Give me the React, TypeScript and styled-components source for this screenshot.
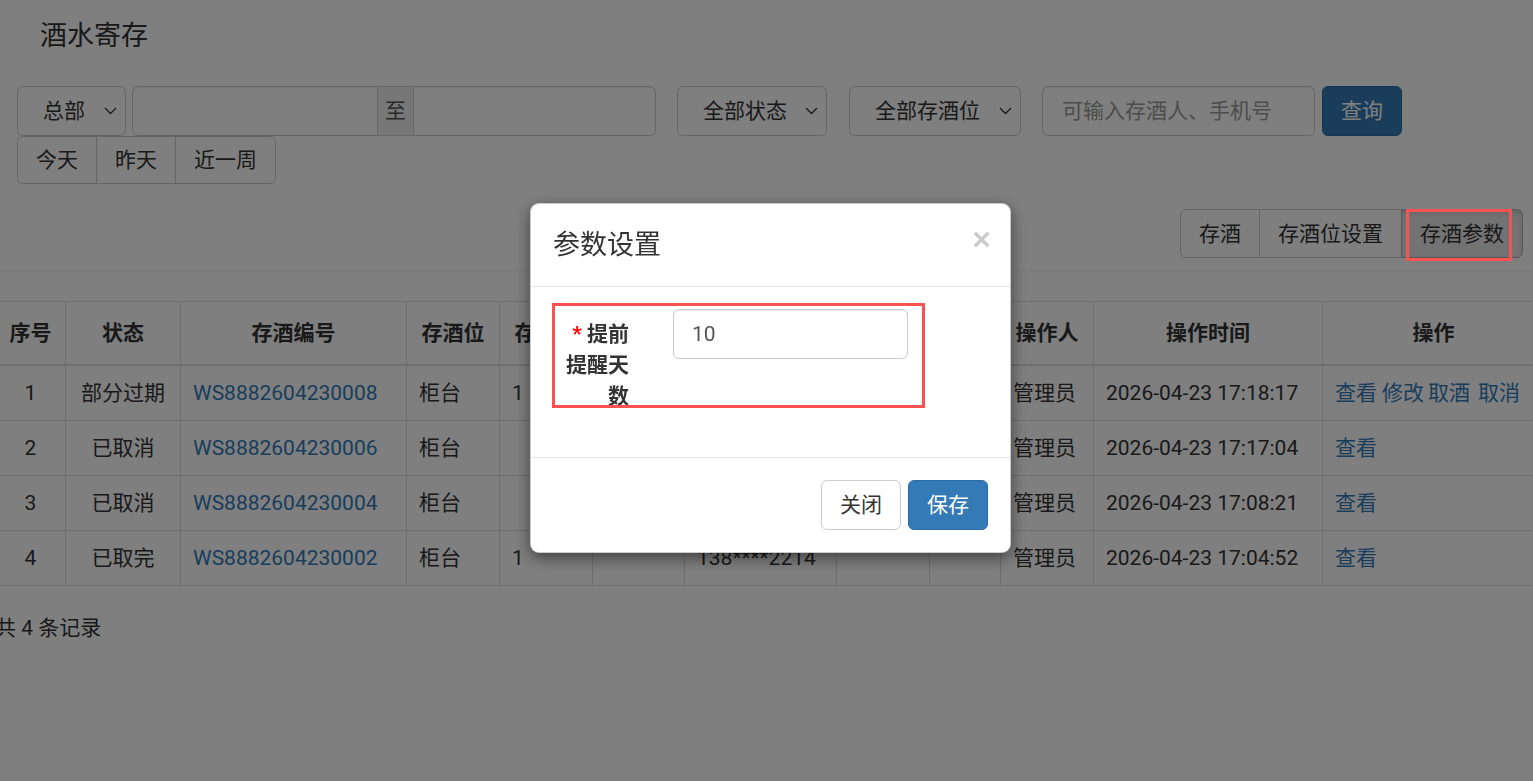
import React from "react";
import styled, { createGlobalStyle } from "styled-components";

const GlobalStyle = createGlobalStyle`
  *, *::before, *::after { box-sizing: border-box; }
  html, body {
    margin: 0;
    padding: 0;
    background: #fff;
    overflow: hidden;
  }
  body {
    font-family: Roboto, "Noto Sans CJK SC", sans-serif;
    font-size: 21px;
    line-height: 30px;
    color: #333;
  }
`;

const ScPage = styled.div`
  width: 1533px;
  height: 781px;
  overflow: hidden;
`;

const ScTitle = styled.h3`
  margin: 0;
  padding: 17px 0 0 40px;
  font-size: 27px;
  line-height: 38px;
  font-weight: 400;
`;

const ScFilter = styled.div`
  padding: 31px 0 0 17px;
`;

const ScFilterRow = styled.div`
  display: flex;
  align-items: center;
`;

const ScSelect = styled.div<{ $w: number; $ml?: number }>`
  display: flex;
  align-items: center;
  width: ${(p) => p.$w}px;
  height: 50px;
  margin-left: ${(p) => p.$ml ?? 0}px;
  padding: 0 8px 0 25px;
  border: 1px solid #ccc;
  border-radius: 6px;
  background: #fff;
  color: #333;

  svg {
    margin-left: auto;
  }
`;

const ScInputGroup = styled.div<{ $ml: number }>`
  display: flex;
  height: 50px;
  margin-left: ${(p) => p.$ml}px;
`;

const ScGroupInput = styled.div<{ $w: number; $side: "left" | "right" }>`
  width: ${(p) => p.$w}px;
  height: 50px;
  border: 1px solid #ccc;
  background: #fff;
  border-radius: ${(p) => (p.$side === "left" ? "6px 0 0 6px" : "0 6px 6px 0")};
  box-shadow: inset 0 1px 1px rgba(0, 0, 0, 0.075);
`;

const ScAddon = styled.div`
  width: 35px;
  height: 50px;
  line-height: 48px;
  text-align: center;
  color: #555;
  background: #eee;
  border-top: 1px solid #ccc;
  border-bottom: 1px solid #ccc;
`;

const ScTextInput = styled.input<{ $w: number; $ml?: number }>`
  width: ${(p) => p.$w}px;
  height: 50px;
  margin: 0 0 0 ${(p) => p.$ml ?? 0}px;
  padding: 0 19px;
  font: inherit;
  color: #555;
  border: 1px solid #ccc;
  border-radius: 6px;
  background: #fff;
  box-shadow: inset 0 1px 1px rgba(0, 0, 0, 0.075);
  outline: none;

  &::placeholder {
    color: #999;
  }
`;

const ScBtn = styled.button<{ $primary?: boolean; $active?: boolean; $h?: number; $ml?: number }>`
  position: relative;
  height: ${(p) => p.$h ?? 50}px;
  margin: 0 0 0 ${(p) => p.$ml ?? 0}px;
  padding: 0 18px;
  font: inherit;
  line-height: 30px;
  white-space: nowrap;
  color: ${(p) => (p.$primary ? "#fff" : "#333")};
  background: ${(p) => (p.$primary ? "#337ab7" : p.$active ? "#e6e6e6" : "#fff")};
  border: 1px solid ${(p) => (p.$primary ? "#2e6da4" : p.$active ? "#adadad" : "#ccc")};
  border-radius: 6px;
  box-shadow: ${(p) => (p.$active ? "inset 0 3px 5px rgba(0,0,0,.125)" : "none")};
  cursor: pointer;
`;

const ScBtnGroup = styled.div`
  display: flex;

  & > ${ScBtn} {
    border-radius: 0;
    margin-left: -1px;
  }
  & > ${ScBtn}:first-child {
    border-radius: 6px 0 0 6px;
    margin-left: 0;
  }
  & > ${ScBtn}:last-child {
    border-radius: 0 6px 6px 0;
  }
`;

/* red annotation frame drawn over the page dimming */
const ScMarked = styled(ScBtn)`
  &::after {
    content: "";
    position: absolute;
    top: -1px;
    left: 4px;
    right: 10px;
    bottom: -4px;
    border: 3px solid #fa5252;
    z-index: 1060;
  }
`;

const ScToolbar = styled.div`
  display: flex;
  justify-content: flex-end;
  margin-top: 25px;
  padding-right: 10px;
`;

const ScRule = styled.div`
  margin-top: 12px;
  border-top: 1px solid #eee;
`;

const ScTableWrap = styled.div`
  margin-top: 30px;
  overflow: hidden;
`;

const ScTable = styled.table`
  width: 1549px;
  margin-left: -5px;
  table-layout: fixed;
  border-collapse: collapse;
`;

const ScTh = styled.th`
  padding: 16px 12px;
  line-height: 30px;
  font-weight: 700;
  text-align: center;
  white-space: nowrap;
  border: 1px solid #ddd;
  border-bottom-width: 2px;
`;

const ScTd = styled.td<{ $center?: boolean }>`
  padding: 12px;
  line-height: 30px;
  text-align: ${(p) => (p.$center ? "center" : "left")};
  white-space: nowrap;
  border: 1px solid #ddd;
`;

const ScLink = styled.a<{ $ml?: number }>`
  color: #337ab7;
  text-decoration: none;
  margin-left: ${(p) => p.$ml ?? 0}px;
`;

const ScCount = styled.div`
  margin: 27px 0 0 -5px;
`;

const ScBackdrop = styled.div`
  position: fixed;
  inset: 0;
  background: rgba(0, 0, 0, 0.5);
  z-index: 1040;
`;

const ScModal = styled.div`
  position: fixed;
  top: 203px;
  left: 530px;
  width: 481px;
  background: #fff;
  border: 1px solid rgba(0, 0, 0, 0.2);
  border-radius: 9px;
  box-shadow: 0 5px 15px rgba(0, 0, 0, 0.5);
  z-index: 1050;
`;

const ScModalHeader = styled.div`
  display: flex;
  justify-content: space-between;
  padding: 22px;
  border-bottom: 1px solid #e5e5e5;
`;

const ScModalTitle = styled.h4`
  margin: 0;
  font-size: 27px;
  line-height: 38px;
  font-weight: 400;
  color: #333;
`;

const ScClose = styled.span`
  margin: -3px -3px 0 0;
  font-family: "Liberation Sans", Arial, sans-serif;
  font-size: 32px;
  font-weight: 700;
  line-height: 32px;
  color: #000;
  opacity: 0.2;
`;

const ScModalBody = styled.div`
  padding: 22px 22px 26px;
`;

const ScFormGroup = styled.div`
  position: relative;
  display: flex;
  align-items: flex-start;
  height: 100px;
  margin-bottom: 22px;

  &::after {
    content: "";
    position: absolute;
    top: -6px;
    left: -1px;
    width: 373px;
    height: 105px;
    border: 3px solid #fa5252;
  }
`;

const ScLabel = styled.label`
  width: 64px;
  margin-left: 12px;
  padding-top: 10px;
  line-height: 31px;
  font-weight: 700;
  text-align: right;
  color: #333;
`;

const ScRequired = styled.span`
  color: #f00;
`;

const ScFormInput = styled.input`
  width: 235px;
  height: 50px;
  margin: 0 0 0 44px;
  padding: 0 18px;
  font: inherit;
  color: #555;
  border: 1px solid #ccc;
  border-radius: 6px;
  box-shadow: inset 0 1px 1px rgba(0, 0, 0, 0.075);
  outline: none;
`;

const ScModalFooter = styled.div`
  display: flex;
  justify-content: flex-end;
  gap: 7px;
  padding: 22px;
  border-top: 1px solid #e5e5e5;
`;

const Chevron = () => (
  <svg width="13" height="8" viewBox="0 0 13 8" fill="none">
    <polyline points="1,1 6.5,6.5 12,1" stroke="#333" strokeWidth="1.3" />
  </svg>
);

const columns = [
  { title: "序号", w: 70 },
  { title: "状态", w: 115 },
  { title: "存酒编号", w: 226 },
  { title: "存酒位", w: 93 },
  { title: "存酒数", w: 93 },
  { title: "剩余数", w: 92 },
  { title: "手机号", w: 152 },
  { title: "存酒人", w: 93 },
  { title: "备注", w: 71 },
  { title: "操作人", w: 93 },
  { title: "操作时间", w: 229 },
  { title: "操作", w: 222 },
];

const rows = [
  { no: 1, status: "部分过期", code: "WS8882604230008", pos: "柜台", qty: "1", left: "1", phone: "138****2214", time: "2026-04-23 17:18:17", full: true },
  { no: 2, status: "已取消", code: "WS8882604230006", pos: "柜台", qty: "", left: "", phone: "138****2214", time: "2026-04-23 17:17:04", full: false },
  { no: 3, status: "已取消", code: "WS8882604230004", pos: "柜台", qty: "", left: "", phone: "138****2214", time: "2026-04-23 17:08:21", full: false },
  { no: 4, status: "已取完", code: "WS8882604230002", pos: "柜台", qty: "1", left: "", phone: "138****2214", time: "2026-04-23 17:04:52", full: false },
];

export default function App() {
  return (
    <ScPage>
      <GlobalStyle />
      <ScTitle>酒水寄存</ScTitle>

      <ScFilter>
        <ScFilterRow>
          <ScSelect $w={109}>
            总部
            <Chevron />
          </ScSelect>
          <ScInputGroup $ml={6}>
            <ScGroupInput $w={246} $side="left" />
            <ScAddon>至</ScAddon>
            <ScGroupInput $w={243} $side="right" />
          </ScInputGroup>
          <ScSelect $w={150} $ml={21}>
            全部状态
            <Chevron />
          </ScSelect>
          <ScSelect $w={172} $ml={22}>
            全部存酒位
            <Chevron />
          </ScSelect>
          <ScTextInput $w={273} $ml={21} placeholder="可输入存酒人、手机号" />
          <ScBtn $primary $ml={7} $h={50}>
            查询
          </ScBtn>
        </ScFilterRow>
        <ScFilterRow>
          <ScBtnGroup>
            <ScBtn $h={48}>今天</ScBtn>
            <ScBtn $h={48}>昨天</ScBtn>
            <ScBtn $h={48}>近一周</ScBtn>
          </ScBtnGroup>
        </ScFilterRow>
      </ScFilter>

      <ScToolbar>
        <ScBtnGroup>
          <ScBtn $h={49}>存酒</ScBtn>
          <ScBtn $h={49}>存酒位设置</ScBtn>
          <ScMarked $h={49} $active>
            存酒参数
          </ScMarked>
        </ScBtnGroup>
      </ScToolbar>

      <ScRule />

      <ScTableWrap>
        <ScTable>
          <colgroup>
            {columns.map((c) => (
              <col key={c.title} style={{ width: c.w }} />
            ))}
          </colgroup>
          <thead>
            <tr>
              {columns.map((c) => (
                <ScTh key={c.title}>{c.title}</ScTh>
              ))}
            </tr>
          </thead>
          <tbody>
            {rows.map((r) => (
              <tr key={r.no}>
                <ScTd $center>{r.no}</ScTd>
                <ScTd $center>{r.status}</ScTd>
                <ScTd>
                  <ScLink href="#">{r.code}</ScLink>
                </ScTd>
                <ScTd>{r.pos}</ScTd>
                <ScTd>{r.qty}</ScTd>
                <ScTd>{r.left}</ScTd>
                <ScTd>{r.phone}</ScTd>
                <ScTd />
                <ScTd />
                <ScTd>管理员</ScTd>
                <ScTd>{r.time}</ScTd>
                <ScTd>
                  <ScLink href="#">查看</ScLink>
                  {r.full && (
                    <>
                      <ScLink href="#" $ml={5}>修改</ScLink>
                      <ScLink href="#" $ml={4}>取酒</ScLink>
                      <ScLink href="#" $ml={8}>取消</ScLink>
                    </>
                  )}
                </ScTd>
              </tr>
            ))}
          </tbody>
        </ScTable>
      </ScTableWrap>

      <ScCount>共 4 条记录</ScCount>

      <ScBackdrop />
      <ScModal>
        <ScModalHeader>
          <ScModalTitle>参数设置</ScModalTitle>
          <ScClose>×</ScClose>
        </ScModalHeader>
        <ScModalBody>
          <ScFormGroup>
            <ScLabel>
              <ScRequired>*</ScRequired> 提前提醒天数
            </ScLabel>
            <ScFormInput defaultValue="10" />
          </ScFormGroup>
        </ScModalBody>
        <ScModalFooter>
          <ScBtn $h={50}>关闭</ScBtn>
          <ScBtn $h={50} $primary>
            保存
          </ScBtn>
        </ScModalFooter>
      </ScModal>
    </ScPage>
  );
}
